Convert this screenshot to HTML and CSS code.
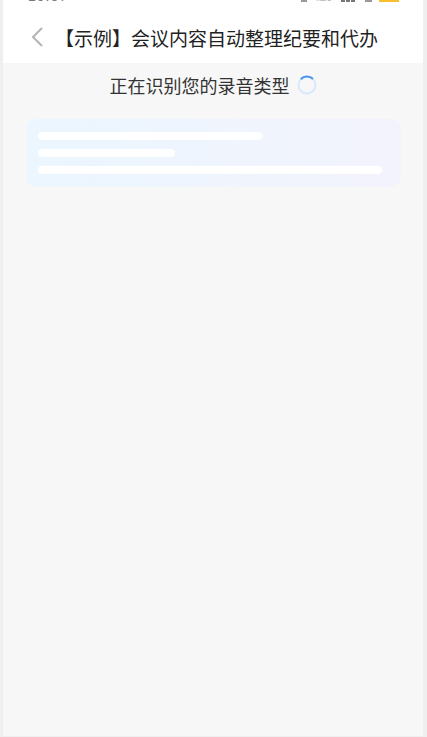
FILE: index.html
```html
<html>
	<head>
		<title>录音类型</title>
		<link rel="stylesheet" href="styles.css">
	</head>
	<body>
		<div class="screen">
			<div class="status">
				<span class="time">15:37</span>
				<div class="status-icons">
					<span class="alarm"></span>
					<span class="speed">KB/s</span>
					<span class="signal"><i></i><i></i><i></i></span>
					<span class="wifi"></span>
					<span class="battery"></span>
				</div>
			</div>
			<div class="header">
				<svg class="back" width="14" height="22" viewBox="0 0 14 22">
					<path d="M12 2 L3 11 L12 20" fill="none" stroke="#b4b4b4" stroke-width="2"/>
				</svg>
				<h1>【示例】会议内容自动整理纪要和代办</h1>
			</div>
			<div class="detect">
				<span>正在识别您的录音类型</span>
				<svg class="spinner" width="20" height="20" viewBox="0 0 20 20">
					<circle cx="10" cy="10" r="8.5" fill="none" stroke="#d9e8fc" stroke-width="2"/>
					<path d="M3.8 4.2 A8.5 8.5 0 0 1 16 4" fill="none" stroke="#4a94f0" stroke-width="2"/>
				</svg>
			</div>
			<div class="card">
				<div class="line line-long"></div>
				<div class="line line-short"></div>
				<div class="line"></div>
			</div>
		</div>
	</body>
</html>
```

FILE: styles.css
```css
body {
	margin: 0;
	background: #efefef;
	font-family: "Liberation Sans", "Noto Sans CJK SC", sans-serif;
}

.screen {
	margin: 0 4px 0 3px;
	height: 736px;
	background: #f7f7f7;
	overflow: hidden;
}

.status {
	display: flex;
	justify-content: space-between;
	align-items: flex-start;
	height: 27px;
	margin-top: -14px;
	padding: 0 24px 0 25px;
	background: #fff;
	font-size: 14px;
	line-height: 16px;
	color: #777;
}

.time {
	padding-top: 2px;
	letter-spacing: 1px;
}

.status-icons {
	display: flex;
	align-items: flex-end;
	height: 16px;
}

.alarm {
	width: 6px;
	height: 2px;
	background: #999;
}

.speed {
	margin-left: 9px;
	font-size: 7px;
	line-height: 7px;
	color: #999;
}

.signal {
	display: flex;
	gap: 1px;
	margin-left: 10px;
}

.signal i {
	width: 4px;
	height: 2px;
	background: #777;
}

.wifi {
	width: 7px;
	height: 2px;
	margin-left: 10px;
	background: #999;
}

.battery {
	width: 20px;
	height: 2px;
	margin-left: 7px;
	background: #f9c02e;
}

.header {
	display: flex;
	align-items: center;
	height: 48px;
	padding-bottom: 2px;
	background: #fff;
}

.back {
	margin-left: 27px;
}

h1 {
	margin: 0 0 0 11px;
	font-size: 19px;
	font-weight: 400;
	white-space: nowrap;
	color: #222;
}

.detect {
	display: flex;
	justify-content: center;
	align-items: center;
	gap: 7px;
	height: 44px;
	font-size: 18px;
	color: #333;
}

.card {
	display: flex;
	flex-direction: column;
	gap: 9px;
	margin: 12px 22px 0 23px;
	padding: 13px 19px 13px 12px;
	border-radius: 10px;
	background: linear-gradient(90deg, #ebf6fe, #f3f3fd);
}

.line {
	height: 8px;
	border-radius: 4px;
	background: #fff;
}

.line-long {
	width: 224px;
}

.line-short {
	width: 137px;
}
```
